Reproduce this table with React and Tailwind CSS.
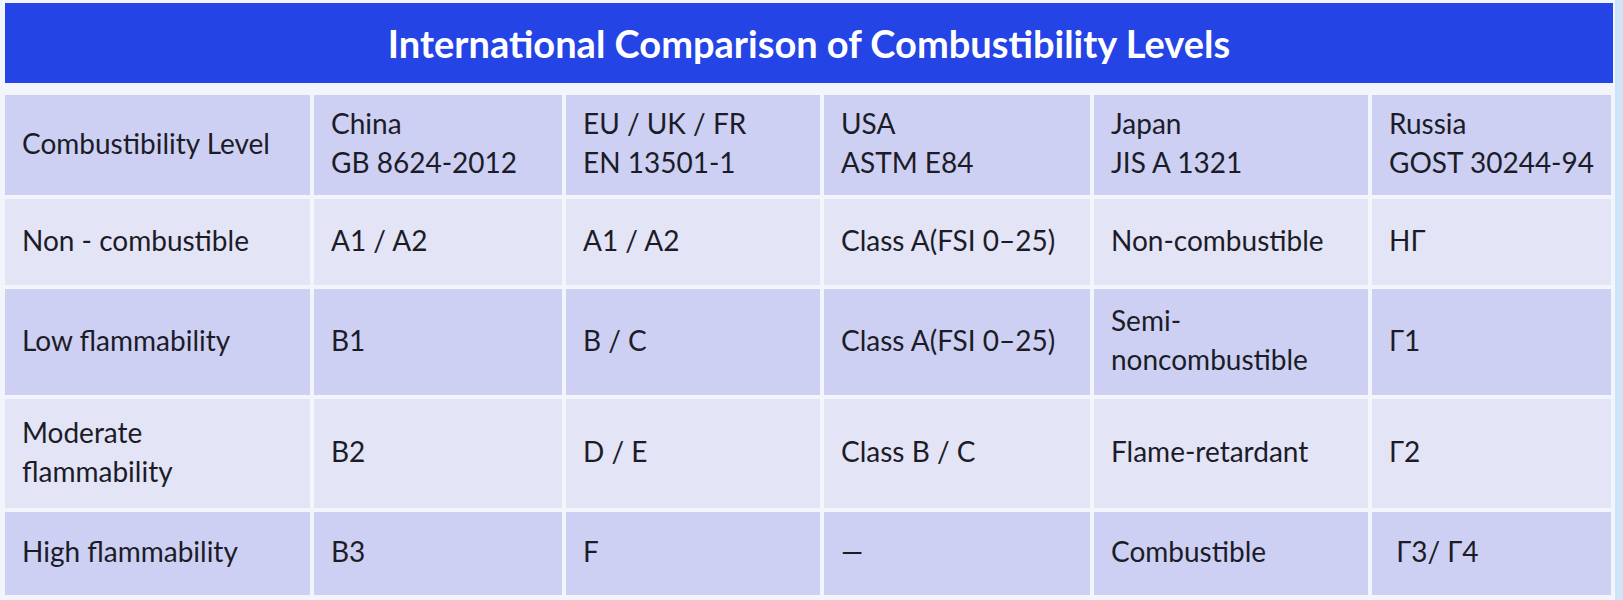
import React from "react";

const cols = ["w-[305px]", "w-[248px]", "w-[254px]", "w-[266px]", "w-[274px]", "w-[239px]"];

const rows = [
  {
    h: "h-[100px]",
    bg: "bg-[#cdd0f3]",
    cells: [
      ["Combustibility Level"],
      ["China", "GB 8624-2012"],
      ["EU / UK / FR", "EN 13501-1"],
      ["USA", "ASTM E84"],
      ["Japan", "JIS A 1321"],
      ["Russia", "GOST 30244-94"],
    ],
  },
  {
    h: "h-[86px]",
    bg: "bg-[#e3e4f6]",
    cells: [["Non - combustible"], ["A1 / A2"], ["A1 / A2"], ["Class A(FSI 0–25)"], ["Non-combustible"], ["НГ"]],
  },
  {
    h: "h-[106px]",
    bg: "bg-[#cdd0f3]",
    cells: [["Low flammability"], ["B1"], ["B / C"], ["Class A(FSI 0–25)"], ["Semi-", "noncombustible"], ["Г1"]],
  },
  {
    h: "h-[109px]",
    bg: "bg-[#e3e4f6]",
    cells: [["Moderate", "flammability"], ["B2"], ["D / E"], ["Class B / C"], ["Flame-retardant"], ["Г2"]],
  },
  {
    h: "h-[83px]",
    bg: "bg-[#cdd0f3]",
    cells: [["High flammability"], ["B3"], ["F"], ["—"], ["Combustible"], ["\u00a0Г3/ Г4"]],
  },
];

export default function App() {
  return (
    <div className="flex w-[1623px] h-[600px] bg-[#f2f5fc] overflow-hidden" style={{ fontFamily: "Lato, 'Open Sans', sans-serif" }}>
      <div className="w-[1615px] pl-[5px] pt-[3px] flex flex-col">
        <div className="w-[1608px] h-[80px] bg-[#2444e6] flex items-center justify-center">
          <h1 className="text-white font-bold text-[38px] leading-none">
            International Comparison of Combustibility Levels
          </h1>
        </div>
        <div className="mt-[12px] flex flex-col gap-[4px]">
          {rows.map((row, ri) => (
            <div key={ri} className={`flex gap-[4px] ${row.h}`}>
              {row.cells.map((lines, ci) => (
                <div key={ci} className={`${cols[ci]} ${row.bg} flex flex-col justify-center pl-[17px] pb-[4px] text-[28px] leading-[39px] text-[#1c1c28]`}>
                  {lines.map((l, li) => (
                    <span key={li} className="whitespace-pre">{l}</span>
                  ))}
                </div>
              ))}
            </div>
          ))}
        </div>
      </div>
      <div className="flex-1 bg-[#cde5f6]" />
    </div>
  );
}
